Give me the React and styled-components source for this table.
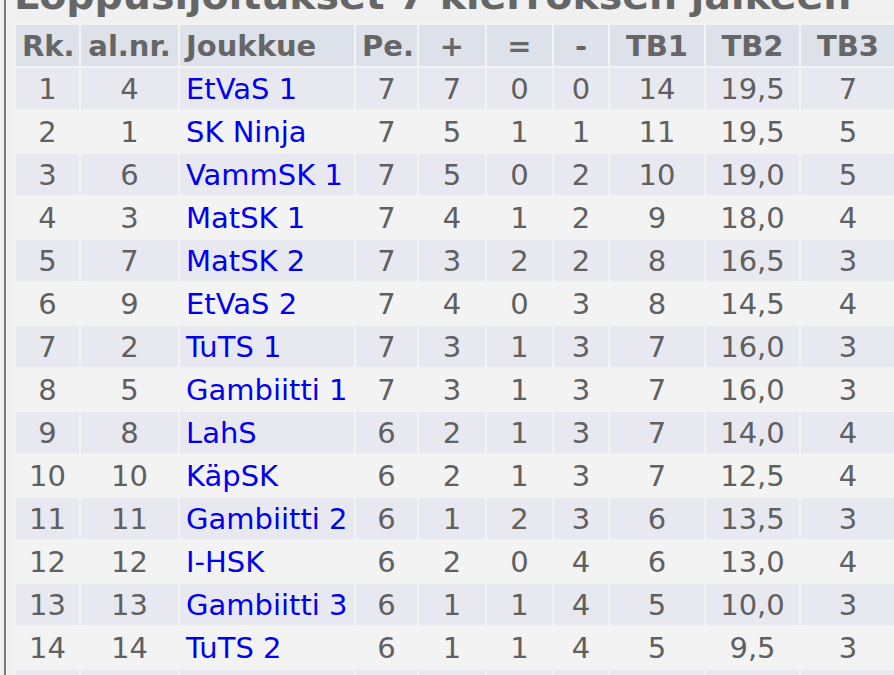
import React from "react";
import styled, { createGlobalStyle } from "styled-components";

const Global = createGlobalStyle`
  html, body {
    margin: 0;
    padding: 0;
    overflow: hidden;
    background: #f0f0f0;
    font-family: "DejaVu Sans", Verdana, sans-serif;
  }
`;

const Page = styled.div`
  margin-left: 4px;
  border-left: 2px solid #7a7a7a;
  padding-left: 8px;
  min-height: 100vh;
  width: 1000px;
`;

const Title = styled.h2`
  margin: -28px 0 5px 0;
  font-size: 39.5px;
  font-weight: bold;
  color: #666666;
  white-space: nowrap;
  line-height: normal;
`;

const Table = styled.table`
  width: 883px;
  border-collapse: separate;
  border-spacing: 2px;
  table-layout: fixed;
  font-size: 29px;
  color: #606060;
  background: #f3f3f3;
`;

const Col = styled.col`
  width: ${(p) => p.$w}px;
`;

const HeadCell = styled.th`
  background: #dde1ea;
  color: #666666;
  font-weight: bold;
  height: 41px;
  padding: 0 6px;
  text-align: ${(p) => (p.$left ? "left" : "center")};
  white-space: nowrap;
  box-sizing: border-box;
`;

const Row = styled.tr`
  background: ${(p) => (p.$odd ? "#e8e9f0" : "#f3f3f3")};
`;

const Cell = styled.td`
  height: 41px;
  padding: 0 6px;
  text-align: ${(p) => (p.$left ? "left" : "center")};
  white-space: nowrap;
  box-sizing: border-box;
`;

const TeamLink = styled.a`
  color: #0000ee;
  text-decoration: none;
`;

const cols = [63, 97, 174, 61, 66, 65, 54, 94, 93, 94];
const heads = ["Rk.", "al.nr.", "Joukkue", "Pe.", "+", "=", "-", "TB1", "TB2", "TB3"];

const rows = [
  [1, 4, "EtVaS 1", 7, 7, 0, 0, 14, "19,5", 7],
  [2, 1, "SK Ninja", 7, 5, 1, 1, 11, "19,5", 5],
  [3, 6, "VammSK 1", 7, 5, 0, 2, 10, "19,0", 5],
  [4, 3, "MatSK 1", 7, 4, 1, 2, 9, "18,0", 4],
  [5, 7, "MatSK 2", 7, 3, 2, 2, 8, "16,5", 3],
  [6, 9, "EtVaS 2", 7, 4, 0, 3, 8, "14,5", 4],
  [7, 2, "TuTS 1", 7, 3, 1, 3, 7, "16,0", 3],
  [8, 5, "Gambiitti 1", 7, 3, 1, 3, 7, "16,0", 3],
  [9, 8, "LahS", 6, 2, 1, 3, 7, "14,0", 4],
  [10, 10, "KäpSK", 6, 2, 1, 3, 7, "12,5", 4],
  [11, 11, "Gambiitti 2", 6, 1, 2, 3, 6, "13,5", 3],
  [12, 12, "I-HSK", 6, 2, 0, 4, 6, "13,0", 4],
  [13, 13, "Gambiitti 3", 6, 1, 1, 4, 5, "10,0", 3],
  [14, 14, "TuTS 2", 6, 1, 1, 4, 5, "9,5", 3],
  [15, 15, "VammSK 2", 6, 0, 1, 5, 4, "9,0", 2],
];

export default function App() {
  return (
    <>
      <Global />
      <Page>
        <Title>Loppusijoitukset 7 kierroksen jälkeen</Title>
        <Table>
          <colgroup>
            {cols.map((w, i) => (
              <Col key={i} $w={w} />
            ))}
          </colgroup>
          <thead>
            <tr>
              {heads.map((h, i) => (
                <HeadCell key={h} $left={i === 2}>
                  {h}
                </HeadCell>
              ))}
            </tr>
          </thead>
          <tbody>
            {rows.map((r, ri) => (
              <Row key={ri} $odd={ri % 2 === 0}>
                {r.map((v, ci) => (
                  <Cell key={ci} $left={ci === 2}>
                    {ci === 2 ? <TeamLink href="#">{v}</TeamLink> : v}
                  </Cell>
                ))}
              </Row>
            ))}
          </tbody>
        </Table>
      </Page>
    </>
  );
}
